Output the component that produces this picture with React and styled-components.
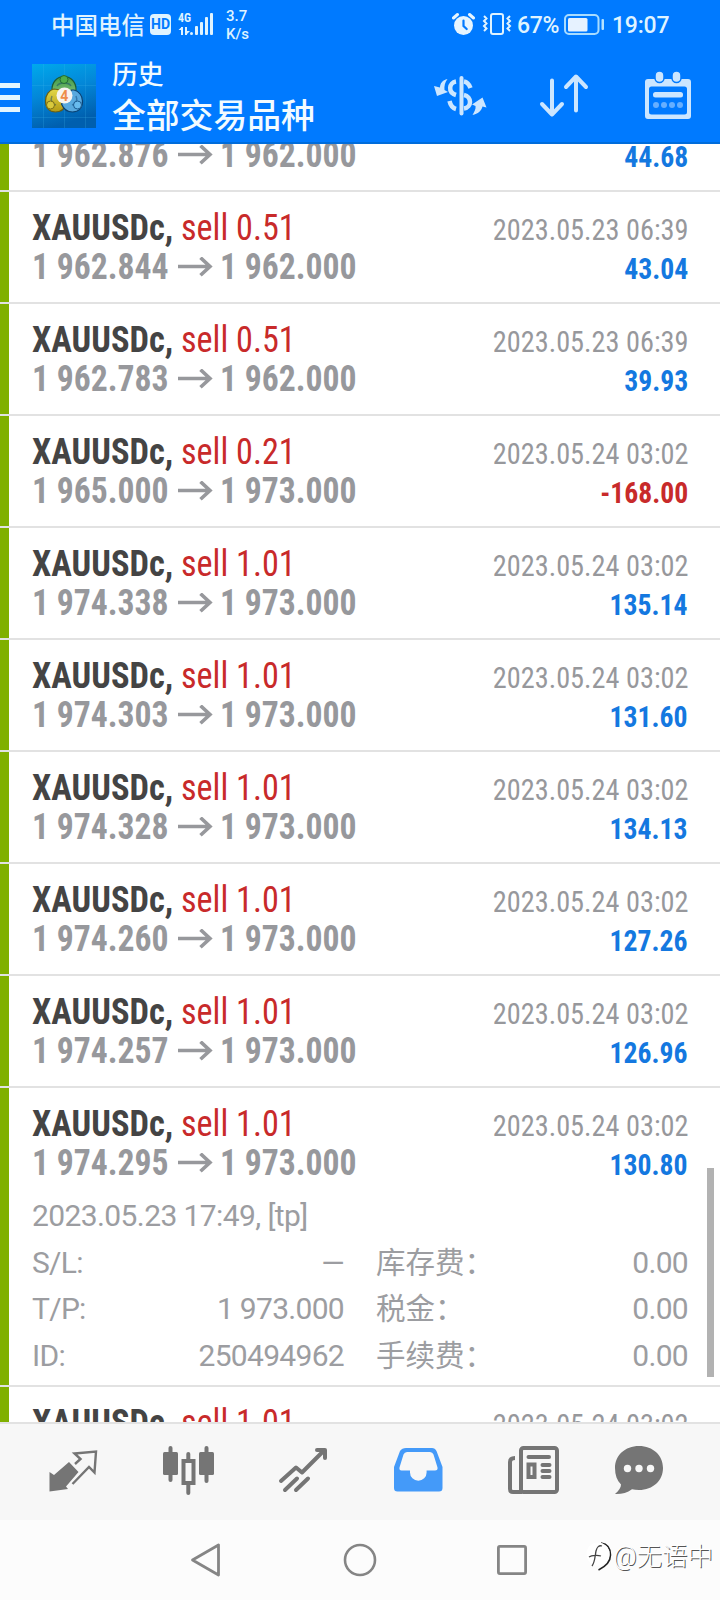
import React from 'react'
import styled, { createGlobalStyle } from 'styled-components'

const deals = [
  { volume: '0.51', open: '1 962.876', close: '1 962.000', time: '2023.05.23 06:39', profit: '44.68' },
  { volume: '0.51', open: '1 962.844', close: '1 962.000', time: '2023.05.23 06:39', profit: '43.04' },
  { volume: '0.51', open: '1 962.783', close: '1 962.000', time: '2023.05.23 06:39', profit: '39.93' },
  { volume: '0.21', open: '1 965.000', close: '1 973.000', time: '2023.05.24 03:02', profit: '-168.00' },
  { volume: '1.01', open: '1 974.338', close: '1 973.000', time: '2023.05.24 03:02', profit: '135.14' },
  { volume: '1.01', open: '1 974.303', close: '1 973.000', time: '2023.05.24 03:02', profit: '131.60' },
  { volume: '1.01', open: '1 974.328', close: '1 973.000', time: '2023.05.24 03:02', profit: '134.13' },
  { volume: '1.01', open: '1 974.260', close: '1 973.000', time: '2023.05.24 03:02', profit: '127.26' },
  { volume: '1.01', open: '1 974.257', close: '1 973.000', time: '2023.05.24 03:02', profit: '126.96' },
  {
    volume: '1.01', open: '1 974.295', close: '1 973.000', time: '2023.05.24 03:02', profit: '130.80',
    details: {
      opened: '2023.05.23 17:49, [tp]',
      rows: [
        ['S/L:', '—', '库存费：', '0.00'],
        ['T/P:', '1 973.000', '税金：', '0.00'],
        ['ID:', '250494962', '手续费：', '0.00'],
      ],
    },
  },
  { volume: '1.01', time: '2023.05.24 03:02' },
]

const StatusBar = () => (
  <Status>
    <Carrier>中国电信</Carrier>
    <HdBadge>HD</HdBadge>
    <Signal>
      <SignalType>4G</SignalType>
      <svg width="36" height="22" viewBox="178 13 36 22" fill="#dff3ff">
        <path d="M181 27h2v8h-2zM178.500 30l3-3v3zM185 27h2v8h-2zM187 31h3l-3 3z" />
        <circle cx="191.500" cy="33.500" r="1.500" />
        <rect x="195" y="26" width="3" height="9" rx="1" />
        <rect x="200" y="22" width="3" height="13" rx="1" />
        <rect x="205" y="17" width="3" height="18" rx="1" />
        <rect x="210" y="13" width="3" height="22" rx="1" />
      </svg>
    </Signal>
    <Speed>
      <span>3.7</span>
      <span>K/s</span>
    </Speed>
    <StatusRight>
      <svg width="24" height="24" viewBox="452 12 24 24" fill="none" stroke="#e6f5ff" strokeLinecap="round">
        <circle cx="463.500" cy="25.500" r="9.500" fill="#e6f5ff" stroke="none" />
        <path d="M453.500 18l4-3.500M473.500 18l-4-3.500" strokeWidth="3" />
        <path d="M463.500 20.500v5.500l3.200 3" stroke="#007aff" strokeWidth="2.200" />
      </svg>
      <svg width="30" height="24" viewBox="482 12 30 24" fill="none" stroke="#dff3ff" strokeWidth="2">
        <rect x="491" y="14" width="12" height="20" rx="2" />
        <path d="M484 16l2.500 2.500-2.500 2.500 2.500 2.500-2.500 2.500 2.500 2.500-2.500 2.500M510 16l-2.500 2.500 2.500 2.500-2.500 2.500 2.500 2.500-2.500 2.500 2.500 2.500" />
      </svg>
      <Percent>67%</Percent>
      <svg width="42" height="24" viewBox="564 12 42 24" fill="none">
        <rect x="566" y="15" width="33.500" height="19" rx="4" stroke="#a8dcff" strokeWidth="2" />
        <rect x="569" y="18" width="19.500" height="13.500" rx="1.500" fill="#e6f2ff" />
        <rect x="602.500" y="19" width="2.500" height="11" rx="1" fill="#b5e2ff" />
      </svg>
      <Clock>19:07</Clock>
    </StatusRight>
  </Status>
)

const Logo = () => (
  <svg width="64" height="64" viewBox="0 0 64 64">
    <defs>
      <linearGradient id="tile" x1="0" y1="0" x2="0.300" y2="1">
        <stop offset="0" stopColor="#00a9ec" />
        <stop offset="0.500" stopColor="#0387d8" />
        <stop offset="1" stopColor="#005fae" />
      </linearGradient>
      <linearGradient id="green" x1="0" y1="0" x2="0" y2="1">
        <stop offset="0" stopColor="#3f9a48" />
        <stop offset="1" stopColor="#8cc77e" />
      </linearGradient>
      <linearGradient id="yellow" x1="0" y1="0" x2="0" y2="1">
        <stop offset="0" stopColor="#e3d84a" />
        <stop offset="1" stopColor="#b39a14" />
      </linearGradient>
    </defs>
    <rect width="64" height="64" fill="url(#tile)" />
    <path d="M11.500 0v64M32.500 0v64M53.500 0v64M0 21.500h64M0 53.500h64" stroke="#42b6ef" strokeOpacity="0.220" />
    <g strokeWidth="1.200">
      <path d="M32 12.500c7 0 12.500 6 12 14l-4 8h-16l-4-8c-.5-8 5-14 12-14z" fill="url(#green)" stroke="#1d5c35" />
      <path d="M22 25c-5 1-8.500 6-8.500 12 0 7 4 11 10 11 5 0 9-3 11-8l-6-14z" fill="url(#yellow)" stroke="#695f15" />
      <path d="M42 26c5 1 8.500 6 8.500 11 0 7-4 11-10 11-5 0-9-3-11-8l10-14z" fill="#58a9df" stroke="#0a4172" />
    </g>
    <path d="M25 22c2-4 12-4 14 0M20 32c-2 4 0 8 4 9M44 32c2 4 0 8-4 9" fill="none" stroke="#0a4172" strokeOpacity="0.450" strokeWidth="1.500" />
    <circle cx="32" cy="15.500" r="4" fill="#4fae4c" stroke="#236c35" />
    <circle cx="18.500" cy="41" r="4" fill="#d9c93c" stroke="#7c7018" />
    <circle cx="45.500" cy="41" r="4" fill="#68bbee" stroke="#1b5b91" />
    <circle cx="32.500" cy="31.500" r="8" fill="#f7f4f0" />
    <LogoDigit x="32.300" y="36.500">4</LogoDigit>
  </svg>
)

const CurrencyIcon = () => (
  <svg width="54" height="48" viewBox="434 71 54 48" fill="none" stroke="#cce6ff" strokeWidth="4">
    <path d="M461.500 78v35.500" strokeLinecap="round" />
    <path d="M456 81.500c-7 1-8.500 11 0 13.500M464 81.500c3.500.5 5 2.500 6.500 6.500M449.500 101c1 4.500 3 7 6.500 8M464 95c8 1.500 8 12.500 0 13.500" strokeWidth="4.500" />
    <path d="M447.500 79c-5 1-7.500 4.500-7.500 8.500l-6-1.500 3 10 11-4-3.500-2c-.5-3.500.5-8 3-11zM472.500 115c2-3.500 3.500-6 3-9l-3.500-1.500 10.500-7 4 10-4-1c-1 4-4.500 7.500-10 8.500z" fill="#cce6ff" stroke="none" />
  </svg>
)

const SortIcon = () => (
  <svg width="52" height="48" viewBox="538 71 52 48" fill="none" stroke="#cce6ff" strokeWidth="4" strokeLinecap="round" strokeLinejoin="round">
    <path d="M552 80.500v34M542 104l10 10.500 10-10.500M576 110.500V77M566 87l10-10.500 10 10.500" />
  </svg>
)

const CalendarIcon = () => (
  <svg width="48" height="48" viewBox="644 71 48 48">
    <path d="M648 79h40q3 0 3 3v34q0 3-3 3h-40q-3 0-3-3V82q0-3 3-3zM651.500 86.500q-2.500 0-2.500 2.500v23q0 2.500 2.500 2.500h33q2.500 0 2.500-2.500V89q0-2.500-2.500-2.500z" fill="#cce6ff" fillRule="evenodd" />
    <g fill="#cce6ff" stroke="#007aff" strokeWidth="1.500">
      <rect x="655" y="71" width="9" height="11.500" rx="4.500" />
      <rect x="672" y="71" width="9" height="11.500" rx="4.500" />
    </g>
    <rect x="653" y="92" width="30" height="5.500" rx="2.500" fill="#cce6ff" />
    <g fill="#66afff">
      <circle cx="656" cy="105" r="3" />
      <circle cx="664" cy="105" r="3" />
      <circle cx="672" cy="105" r="3" />
      <circle cx="680" cy="105" r="3" />
    </g>
  </svg>
)

const Arrow = () => (
  <svg width="36" height="22" viewBox="0 0 36 22" fill="none" stroke="#97989c" strokeWidth="3.600">
    <path d="M0 9.500h32.500M22.500 .7l9.500 8.800-9.500 8.800" />
  </svg>
)

const Deal = ({ deal }) => (
  <Row>
    <Summary>
      <Left>
        <Title>
          <Symbol>XAUUSDc,</Symbol>
          <Side>sell {deal.volume}</Side>
        </Title>
        {deal.open && (
          <Prices>
            <Price>{deal.open}</Price>
            <Arrow />
            <Price>{deal.close}</Price>
          </Prices>
        )}
      </Left>
      <Right>
        <Time>{deal.time}</Time>
        {deal.profit && <Profit $loss={deal.profit.startsWith('-')}>{deal.profit}</Profit>}
      </Right>
    </Summary>
    {deal.details && (
      <Details>
        <DetailLine>{deal.details.opened}</DetailLine>
        {deal.details.rows.map(([label, value, feeLabel, fee]) => (
          <DetailGrid key={label}>
            <span>{label}</span>
            <DetailValue>{value}</DetailValue>
            <FeeLabel>{feeLabel}</FeeLabel>
            <DetailValue>{fee}</DetailValue>
          </DetailGrid>
        ))}
      </Details>
    )}
  </Row>
)

const TabIcons = () => (
  <Tabs>
    <TabIcon viewBox="46 1444 56 56">
      <path d="M69 1462l9.500 10-12.500 14.500 2 2.500-18.500 2.500v-19.500l4.500 3z" fill="#757575" />
      <path d="M75 1464l5.500-5-6-5.500 21.500-2-1.500 21-5.500-5.500-16.500 17" fill="none" stroke="#757575" strokeWidth="2.400" />
    </TabIcon>
    <TabIcon viewBox="161 1444 56 56" fill="#757575">
      <rect x="168.500" y="1446" width="4" height="36" rx="2" />
      <rect x="163" y="1452" width="15" height="23" rx="1.500" />
      <rect x="204.500" y="1446" width="4" height="37" rx="2" />
      <rect x="199" y="1452" width="15" height="23" rx="1.500" />
      <rect x="186.300" y="1452" width="4" height="43" rx="2" />
      <rect x="183.500" y="1461" width="10" height="22" fill="#f7f7f7" stroke="#757575" strokeWidth="4" />
    </TabIcon>
    <TabIcon viewBox="276 1444 56 56" fill="none" stroke="#757575" strokeWidth="4" strokeLinecap="round" strokeLinejoin="round">
      <path d="M281 1481l15-13.500 6 5 22.500-22.500M317 1450h8v8M285 1490l12-11.500M296 1490l12-11.500" />
    </TabIcon>
    <TabIcon viewBox="391 1444 56 56">
      <path d="M406 1448h26q3 0 4.500 3l6 16v21q0 3.500-3.500 3.500h-41.500q-3.500 0-3.500-3.500v-21l6-16q2-3 6-3zM407 1452q-2.500 0-3.500 2.500l-4 13q-.5 3 2 3h8.500v2a8.300 8.300 0 0 0 16.600 0v-2h8.400q3 0 2.500-3l-4-13q-1-2.500-3.500-2.500z" fill="#449af9" fillRule="evenodd" />
    </TabIcon>
    <TabIcon viewBox="506 1444 56 56" fill="none" stroke="#757575" strokeWidth="4">
      <rect x="521" y="1448" width="36" height="44" rx="2.500" />
      <path d="M515 1458c-3 0-5 1-5 4v27q0 3 3 3h9" />
      <rect x="528.500" y="1464.500" width="6" height="12.500" />
      <path d="M528.500 1457h20.500M542.500 1465h7M542.500 1471h7M542.500 1477h7" strokeLinecap="round" />
    </TabIcon>
    <TabIcon viewBox="611 1444 56 56">
      <path d="M639 1446c14 0 24 9.500 24 22s-10 22-24 22q-4 0-7-.8c-5 3.500-10 5-17 4.800 4-3.500 6-6.500 6-9.500-4-4-6-9.500-6-16.500 0-12.500 10-22 24-22z" fill="#757575" />
      <g fill="#f7f7f7">
        <circle cx="627.500" cy="1468.500" r="3.700" />
        <circle cx="639" cy="1468.500" r="3.700" />
        <circle cx="650.500" cy="1468.500" r="3.700" />
      </g>
    </TabIcon>
  </Tabs>
)

const SystemNav = () => (
  <System>
    <svg width="32" height="36" viewBox="190 1542 32 36" fill="none" stroke="#858585" strokeWidth="2.800" strokeLinejoin="round">
      <path d="M192.500 1560l26-15v30z" />
    </svg>
    <svg width="36" height="36" viewBox="341 1542 36 36" fill="none" stroke="#858585" strokeWidth="2.600">
      <circle cx="360" cy="1560" r="15" />
    </svg>
    <svg width="32" height="36" viewBox="496 1542 32 36" fill="none" stroke="#858585" strokeWidth="2.800">
      <rect x="498.400" y="1546.400" width="27.200" height="27.200" rx="1.500" />
    </svg>
    <Watermark>
      <svg width="28" height="32" viewBox="584 1541 28 32" fill="none">
        <path d="M600 1544c7 1 9.500 5 9.500 12 0 7-4 11-12 15" stroke="#222" strokeWidth="1.600" />
        <circle cx="597" cy="1555" r="11.500" fill="#fff" />
        <path d="M591 1567c3-4 3-10 4-15 1-4 3-6 6-5M588 1558c3-2 9-2 12-1" stroke="#444" strokeWidth="1.300" />
      </svg>
      <span>@无语中</span>
    </Watermark>
  </System>
)

const App = () => {
  return (
    <Screen>
      <GlobalStyle />
      <Header>
        <StatusBar />
        <Toolbar>
          <Burger>
            <i />
            <i />
            <i />
          </Burger>
          <Logo />
          <Heading>
            <h2>历史</h2>
            <h1>全部交易品种</h1>
          </Heading>
          <Actions>
            <CurrencyIcon />
            <SortIcon />
            <CalendarIcon />
          </Actions>
        </Toolbar>
      </Header>
      <List>
        <Scrolled>
          {deals.map((deal, i) => (
            <Deal key={i} deal={deal} />
          ))}
        </Scrolled>
        <ScrollThumb />
      </List>
      <TabIcons />
      <SystemNav />
    </Screen>
  )
}

export default App

const GlobalStyle = createGlobalStyle`
  * {
    box-sizing: border-box;
  }
  body {
    margin: 0;
    font-family: Roboto, "Noto Sans CJK SC", sans-serif;
  }
  svg {
    display: block;
    flex: none;
  }
`;
const Screen = styled.div`
  width: 720px;
  height: 1600px;
  display: flex;
  flex-direction: column;
  overflow: hidden;
  background-color: #fff;
`;
const Header = styled.div`
  height: 144px;
  flex: none;
  background-color: #007aff;
  border-bottom: 2px solid #006cdb;
  color: #f2fbff;
`;
const Status = styled.div`
  height: 48px;
  display: flex;
  align-items: center;
  padding-left: 51px;
  color: #dff3ff;
`;
const Carrier = styled.span`
  width: 99px;
  padding-top: 3px;
  font-size: 23.5px;
  font-weight: 500;
  line-height: 48px;
`;
const HdBadge = styled.span`
  width: 21px;
  height: 21px;
  border-radius: 4px;
  background-color: #dff3ff;
  color: #007aff;
  font-size: 14px;
  font-weight: 700;
  line-height: 21px;
  text-align: center;
`;
const Signal = styled.div`
  position: relative;
  margin-left: 7px;
`;
const SignalType = styled.span`
  position: absolute;
  top: -1px;
  left: 0;
  font-size: 12px;
  font-stretch: 75%;
  font-weight: 700;
  line-height: 13px;
`;
const Speed = styled.div`
  display: flex;
  flex-direction: column;
  margin-left: 12px;
  padding-top: 1px;
  font-size: 15px;
  font-weight: 500;
  line-height: 18px;
`;
const StatusRight = styled.div`
  display: flex;
  align-items: center;
  margin-left: auto;
  padding-right: 49px;
  > svg + svg {
    margin-left: 6px;
  }
`;
const Percent = styled.span`
  width: 46px;
  margin-left: 5px;
  padding-top: 3px;
  font-size: 23px;
  font-weight: 500;
  letter-spacing: -0.3px;
  line-height: 50px;
`;
const Clock = styled.span`
  width: 59px;
  margin-left: 7px;
  padding-top: 3px;
  font-size: 23px;
  font-weight: 500;
  letter-spacing: -0.2px;
  line-height: 50px;
`;
const Toolbar = styled.div`
  height: 96px;
  display: flex;
  align-items: center;
`;
const Burger = styled.div`
  width: 20px;
  margin: 3px 12px 0 0;
  display: flex;
  flex-direction: column;
  gap: 7px;
  > i {
    height: 5px;
    background-color: #e2f5ff;
  }
`;
const Heading = styled.div`
  margin-left: 16px;
  padding-top: 6px;
  > h2 {
    margin: 0;
    font-size: 25.800px;
    font-weight: 500;
    line-height: 36px;
  }
  > h1 {
    margin: 0;
    font-size: 33.800px;
    font-weight: 500;
    line-height: 48px;
  }
`;
const Actions = styled.div`
  display: flex;
  align-items: center;
  margin: -2px 0 0 auto;
  padding-right: 28px;
  > :first-child {
    margin-right: 50px;
  }
  > :last-child {
    margin-left: 54px;
  }
`;
const LogoDigit = styled.text`
  font-family: Roboto, sans-serif;
  font-size: 14px;
  font-weight: 700;
  fill: #ee8d4a;
  text-anchor: middle;
`;
const List = styled.div`
  position: relative;
  height: 1278px;
  flex: none;
  overflow: hidden;
`;
const Scrolled = styled.div`
  margin-top: -64px;
`;
const ScrollThumb = styled.div`
  position: absolute;
  top: 1024px;
  right: 6px;
  width: 7px;
  height: 209px;
  background-color: #b2b2b2;
`;
const Row = styled.div`
  border-bottom: 2px solid #e2e2e2;
  padding-left: 24px;
  background: linear-gradient(to right, #80b000 9px, #fff 9px);
`;
const Summary = styled.div`
  height: 110px;
  display: flex;
  justify-content: space-between;
  padding: 16px 32px 0 8px;
  white-space: nowrap;
`;
const Left = styled.div`
  padding-top: 1px;
  font-family: "Roboto Condensed", Roboto, sans-serif;
  font-stretch: 75%;
  font-size: 36px;
  line-height: 39px;
  span {
    transform-origin: left;
  }
`;
const Title = styled.div`
  display: flex;
`;
const Symbol = styled.span`
  width: 149px;
  color: #444;
  font-weight: 700;
  transform: scaleX(0.957);
`;
const Side = styled.span`
  color: #c82a2a;
  transform: scaleX(0.948);
`;
const Prices = styled.div`
  display: flex;
  align-items: center;
`;
const Price = styled.span`
  width: 146px;
  color: #97989c;
  font-weight: 700;
  transform: scaleX(0.935);
  svg + & {
    margin-left: 6px;
  }
`;
const Right = styled.div`
  display: flex;
  flex-direction: column;
  align-items: flex-end;
  padding-top: 2px;
  font-family: "Roboto Condensed", Roboto, sans-serif;
  font-stretch: 75%;
  font-size: 30px;
  line-height: 39px;
  span {
    transform-origin: right;
  }
`;
const Time = styled.span`
  color: #97989c;
  transform: scaleX(0.943);
`;
const Profit = styled.span`
  color: ${({ $loss }) => ($loss ? '#c82a2a' : '#1478e0')};
  font-weight: 700;
  transform: scaleX(0.923);
`;
const Details = styled.div`
  height: 187px;
  margin-top: -5px;
  margin-bottom: 5px;
  padding: 0 32px 0 8px;
  color: #9c9da1;
  font-size: 30px;
  font-weight: 400;
  letter-spacing: -0.700px;
  line-height: 46.5px;
`;
const DetailLine = styled.div`
  height: 46.5px;
  letter-spacing: -0.600px;
`;
const DetailGrid = styled.div`
  display: grid;
  grid-template-columns: 100px 212px 133px 1fr;
  height: 46.5px;
`;
const DetailValue = styled.span`
  text-align: right;
`;
const FeeLabel = styled.span`
  padding-left: 32px;
  font-size: 29.500px;
  letter-spacing: 0;
  white-space: nowrap;
`;
const Tabs = styled.div`
  height: 98px;
  flex: none;
  display: flex;
  align-items: flex-start;
  gap: 59px;
  padding: 20px 0 0 46px;
  border-top: 2px solid #e2e2e2;
  background-color: #f7f7f7;
  > :last-child {
    margin-left: -10px;
  }
`;
const TabIcon = styled.svg`
  width: 56px;
  height: 56px;
`;
const System = styled.div`
  position: relative;
  height: 80px;
  flex: none;
  display: flex;
  align-items: center;
  gap: 119px;
  padding-left: 190px;
  background-color: #fcfcfc;
`;
const Watermark = styled.div`
  position: absolute;
  right: 7px;
  bottom: 28px;
  display: flex;
  align-items: center;
  color: #fff;
  font-size: 25.500px;
  font-weight: 300;
  line-height: 32px;
  text-shadow: 1px 1px 0 #555;
`;
